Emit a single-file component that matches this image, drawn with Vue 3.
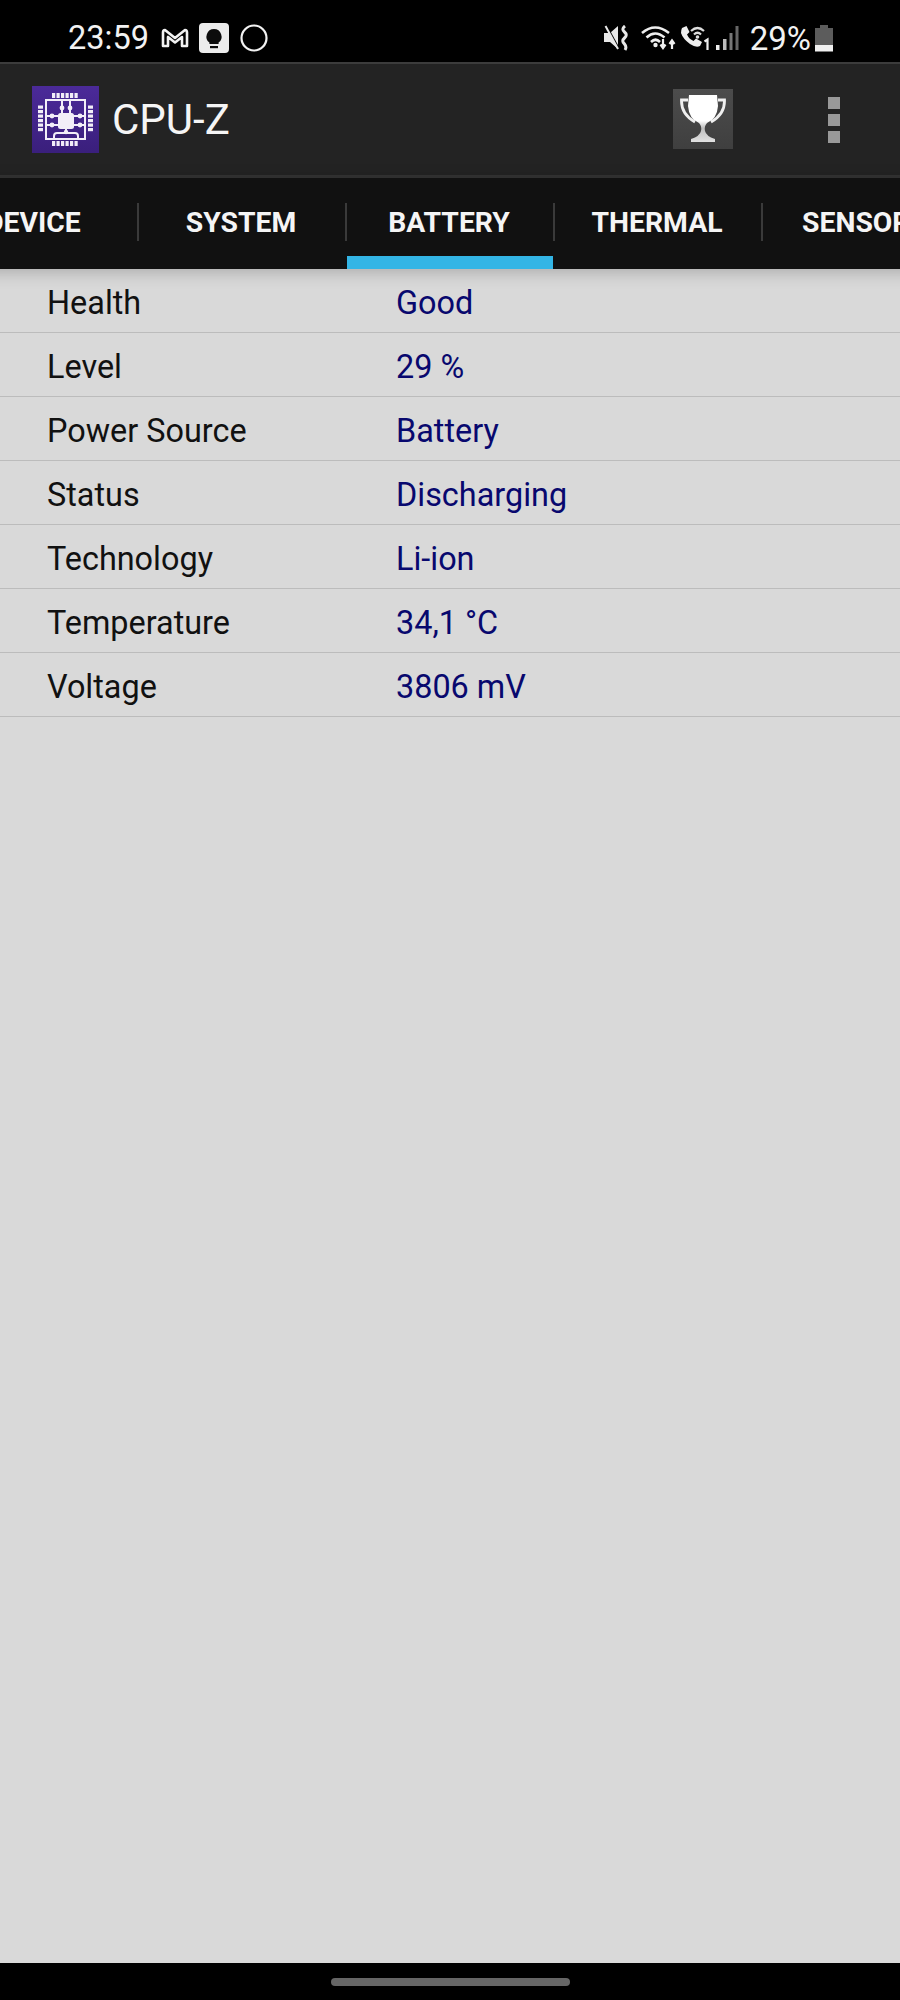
<template>
  <div class="screen">
    <div class="statusBar">
      <div class="statusLeft">
        <span class="time">23:59</span>
        <svg class="gmail" width="28" height="20" viewBox="0 0 28 20">
          <path d="M2 18V4.500Q2 2 4 2L14 10L24 2Q26 2 26 4.500V18H21V9L14 14.500L7 9V18Z" fill="none" stroke="#f2f2f2" stroke-width="2.600" stroke-linejoin="round" />
        </svg>
        <svg class="bulb" width="30" height="30" viewBox="0 0 30 30">
          <rect width="30" height="30" rx="4" fill="#ececec" />
          <path d="M15 6a7.600 7.600 0 0 0-4.600 13.600V21h9.200v-1.400A7.600 7.600 0 0 0 15 6Z" fill="#0c0c0c" />
          <rect x="11" y="23" width="8" height="2.200" fill="#0c0c0c" />
        </svg>
        <svg class="circle" width="28" height="28" viewBox="0 0 28 28">
          <circle cx="14" cy="14" r="12.500" fill="none" stroke="#f2f2f2" stroke-width="2.200" />
        </svg>
      </div>
      <div class="statusRight">
        <svg width="28" height="26" viewBox="0 0 26 26">
          <path d="M0 8H6L14 1V24L6 17H0Z" fill="#e8e8e8" />
          <path d="M3 2L15 24" stroke="#000" stroke-width="2" />
          <path d="M1.500 1L14 24" stroke="#e8e8e8" stroke-width="2" />
          <path d="M21 1Q17 4 20.500 7Q24 10 20.500 13Q17 16 20.500 19Q23 22 21 25" fill="none" stroke="#e8e8e8" stroke-width="3" />
        </svg>
        <svg class="wifi" width="36" height="26" viewBox="0 0 36 26">
          <g fill="none" stroke="#eee" stroke-width="2.600">
            <path d="M1 8Q14 -3 28 8" />
            <path d="M5.500 12.500Q14 4.500 23.500 12.500" />
            <path d="M10 17Q14.500 12.500 19 17" />
          </g>
          <circle cx="14.500" cy="20" r="2.200" fill="#eee" />
          <path d="M22 14V22M19.500 19.500L22 23L24.500 19.500" fill="none" stroke="#eee" stroke-width="2.200" />
          <path d="M31 24V16M28.500 19L31 15.500L33.500 19" fill="none" stroke="#eee" stroke-width="2.200" />
        </svg>
        <svg class="call" width="34" height="26" viewBox="0 0 34 26">
          <path d="M3 3L7.500 1L10.500 7L8 9.500Q10 14 14.500 16L17 13.500L23 17L21 21Q17 23 11 19Q4 14 2 8Q2 5 3 3Z" fill="#eee" />
          <g fill="none" stroke="#ddd" stroke-width="2.200">
            <path d="M12 6Q18.500 0 25 6" />
            <path d="M15 9.500Q18.500 6 22 9.500" />
          </g>
          <circle cx="18.500" cy="12" r="1.800" fill="#ddd" />
          <path d="M25.500 16.500L28.500 14.500V25" fill="none" stroke="#eee" stroke-width="2.200" />
        </svg>
        <svg class="signal" width="24" height="26" viewBox="0 0 24 26">
          <rect x="1" y="20" width="3.500" height="5" fill="#eee" />
          <rect x="8" y="14" width="3.500" height="11" fill="#bbb" />
          <rect x="14.500" y="8" width="3" height="17" fill="#777" />
          <rect x="20.500" y="1" width="3" height="24" fill="#666" />
        </svg>
        <span class="percent">29%</span>
        <svg class="battery" width="18" height="27" viewBox="0 0 18 27">
          <rect x="5" y="0" width="8" height="3" fill="#5c5c5c" />
          <rect x="0" y="3" width="18" height="18" fill="#5c5c5c" />
          <rect x="0" y="20" width="18" height="6.500" fill="#f0f0f0" />
        </svg>
      </div>
    </div>

    <div class="actionBar">
      <div class="appIcon">
        <svg width="67" height="67" viewBox="0 0 67 67">
          <defs>
            <linearGradient id="iconBg" x1="0" y1="0" x2="0" y2="1">
              <stop offset="0" stop-color="#4b2a99" />
              <stop offset="1" stop-color="#3a1f7c" />
            </linearGradient>
          </defs>
          <rect width="67" height="67" fill="url(#iconBg)" />
          <g fill="#f2eef8">
            <rect v-for="n in 6" :key="'t' + n" :x="15.500 + n * 4.500" y="7" width="3.200" height="5" />
            <rect v-for="n in 6" :key="'b' + n" :x="15.500 + n * 4.500" y="55" width="3.200" height="5" />
            <rect v-for="n in 6" :key="'l' + n" x="6" :y="15 + n * 4.500" width="5" height="3.200" />
            <rect v-for="n in 6" :key="'r' + n" x="56" :y="15 + n * 4.500" width="5" height="3.200" />
            <rect x="26" y="27" width="16" height="16" rx="2.500" />
            <circle cx="30" cy="22" r="2.400" />
            <circle cx="38" cy="22" r="2.400" />
            <circle cx="20" cy="30" r="2.400" />
            <circle cx="20" cy="39" r="2.400" />
            <circle cx="48" cy="30" r="2.400" />
            <circle cx="48" cy="39" r="2.400" />
            <circle cx="34" cy="46" r="2.200" />
          </g>
          <g fill="none" stroke="#f2eef8" stroke-width="2">
            <rect x="14" y="14" width="39" height="39" />
            <path d="M30 14V27M38 14V27M14 30H26M14 39H26M42 30H53M42 39H53M34 43V47" />
            <path d="M22 53V50Q22 47 25 47H43Q46 47 46 50V53" />
          </g>
        </svg>
      </div>
      <span class="appTitle">CPU-Z</span>
      <div class="trophyBox">
        <svg width="46" height="50" viewBox="0 0 46 50">
          <defs>
            <linearGradient id="cupFade" x1="0" y1="0" x2="0" y2="1">
              <stop offset="0" stop-color="#ffffff" />
              <stop offset="0.55" stop-color="#ffffff" />
              <stop offset="0.7" stop-color="#bdbdbd" />
              <stop offset="1" stop-color="#e2e2e2" />
            </linearGradient>
          </defs>
          <path d="M9 1H37L38 12Q37 25 27 29Q24 32 25 37Q26 42 35 45V48H11V45Q20 42 21 37Q22 32 19 29Q9 25 8 12Z" fill="url(#cupFade)" />
          <path d="M8 6H1.500Q1 20 15 28M38 6H44.500Q45 20 31 28" fill="none" stroke="#f0f0f0" stroke-width="2.800" />
        </svg>
      </div>
      <div class="overflowDots">
        <span></span>
        <span></span>
        <span></span>
      </div>
    </div>

    <div class="tabBar">
      <div v-for="(tab, index) in tabs" :key="tab" class="tab" :class="{ active: tab === 'BATTERY', divided: index < tabs.length - 1 }">
        {{ tab }}
      </div>
    </div>

    <div class="content">
      <div v-for="row in rows" :key="row.label" class="row">
        <div class="label">{{ row.label }}</div>
        <div class="value">{{ row.value }}</div>
      </div>
    </div>

    <div class="navBar">
      <div class="homeHandle"></div>
    </div>
  </div>
</template>

<script setup>
const tabs = ['DEVICE', 'SYSTEM', 'BATTERY', 'THERMAL', 'SENSORS']

const rows = [
  { label: 'Health', value: 'Good' },
  { label: 'Level', value: '29 %' },
  { label: 'Power Source', value: 'Battery' },
  { label: 'Status', value: 'Discharging' },
  { label: 'Technology', value: 'Li-ion' },
  { label: 'Temperature', value: '34,1 °C' },
  { label: 'Voltage', value: '3806 mV' }
]
</script>

<style scoped>
.screen {
  width: 900px;
  height: 2000px;
  display: flex;
  flex-direction: column;
  overflow: hidden;
  font-family: Roboto, "Liberation Sans", sans-serif;
  background-color: #d9d9d9;
}
.statusBar {
  height: 62px;
  flex: none;
  background-color: #000;
  display: flex;
  justify-content: space-between;
  align-items: center;
  color: #f2f2f2;
  padding: 14px 67px 0 68px;
  box-sizing: border-box;
}
.statusLeft,
.statusRight {
  display: flex;
  align-items: center;
}
.time {
  font-size: 32.500px;
}
.percent {
  font-size: 33px;
  margin-left: 11px;
}
.gmail {
  margin-left: 12px;
}
.bulb {
  margin-left: 10px;
}
.circle {
  margin-left: 11px;
}
.wifi {
  margin-left: 10px;
}
.call {
  margin-left: 2px;
}
.signal {
  margin-left: 2px;
}
.battery {
  margin-left: 4px;
}
.actionBar {
  height: 116px;
  flex: none;
  box-sizing: border-box;
  background-color: #232323;
  border-top: 2px solid #3c3c3c;
  border-bottom: 3px solid #333;
  display: flex;
  align-items: center;
  padding-left: 32px;
}
.appIcon {
  width: 67px;
  height: 67px;
  flex: none;
}
.appIcon svg,
.trophyBox svg {
  display: block;
}
.appTitle {
  margin-left: 13px;
  font-size: 42px;
  color: #f5f5f5;
}
.trophyBox {
  margin-left: auto;
  margin-bottom: 2px;
  width: 60px;
  height: 60px;
  background: linear-gradient(#4c4c4c, #3f3f3f);
  display: flex;
  align-items: center;
  justify-content: center;
}
.overflowDots {
  margin-left: 95px;
  margin-right: 60px;
  display: flex;
  flex-direction: column;
  gap: 5px;
}
.overflowDots span {
  width: 12px;
  height: 12px;
  background-color: #999;
}
.tabBar {
  height: 91px;
  flex: none;
  position: relative;
  z-index: 1;
  background-color: #111;
  box-shadow: 0 3px 16px rgba(0, 0, 0, 0.22);
  display: flex;
  margin-left: -69px;
  width: 1040px;
}
.tab {
  width: 208px;
  flex: none;
  box-sizing: border-box;
  height: 91px;
  padding: 0 4px 2px 0;
  display: flex;
  align-items: center;
  justify-content: center;
  font-size: 28.300px;
  font-weight: 700;
  color: #f5f5f5;
  position: relative;
}
.tab.divided::after {
  content: '';
  position: absolute;
  right: 0;
  top: 25px;
  width: 2px;
  height: 38px;
  background-color: #3a3a3a;
}
.tab.active::before {
  content: '';
  position: absolute;
  left: 0;
  right: 2px;
  bottom: 0;
  height: 13px;
  background-color: #33b5e5;
}
.content {
  flex: 1;
}
.row {
  height: 64px;
  box-sizing: border-box;
  border-bottom: 1px solid #bcbcbc;
  padding-top: 5px;
  display: grid;
  grid-template-columns: 349px 1fr;
  align-items: center;
  padding-left: 47px;
  font-size: 32.400px;
}
.label {
  color: #111;
}
.value {
  color: #08086e;
}
.navBar {
  height: 37px;
  flex: none;
  background-color: #000;
  display: flex;
  align-items: center;
  justify-content: center;
}
.homeHandle {
  width: 239px;
  height: 8px;
  border-radius: 4px;
  background-color: #666;
}
</style>
